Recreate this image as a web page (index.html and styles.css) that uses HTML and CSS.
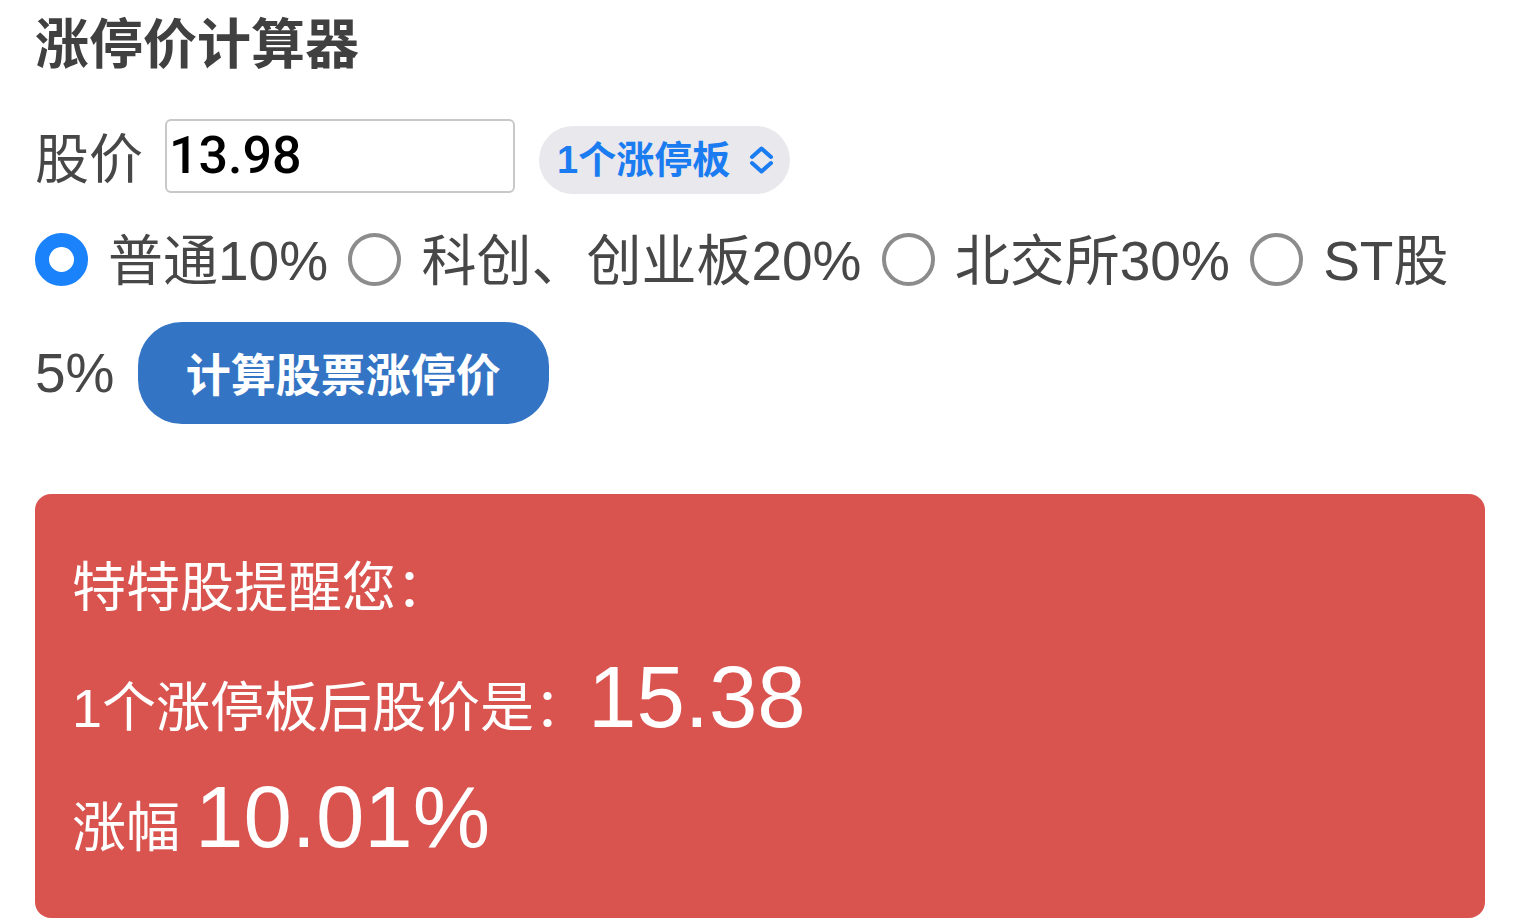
FILE: index.html
```html
<!DOCTYPE html>
<html lang="zh-CN">
<head>
<meta charset="utf-8">
<title>涨停价计算器</title>
<link rel="stylesheet" href="styles.css">
</head>
<body>
<main class="page">
  <h1 class="title">涨停价计算器</h1>
  <div class="price-row">
    <label class="price-label" for="price">股价</label>
    <input class="price-input" id="price" type="text" value="13.98">
    <div class="board-select" role="listbox">
      <span class="board-text">1个涨停板</span>
      <svg class="chev" width="27" height="30" viewBox="0 0 27 30" aria-hidden="true">
        <path d="M4 12 L13.5 3.5 L23 12" fill="none" stroke="#1a7cf0" stroke-width="4" stroke-linecap="round" stroke-linejoin="round"/>
        <path d="M4 18 L13.5 26.5 L23 18" fill="none" stroke="#1a7cf0" stroke-width="4" stroke-linecap="round" stroke-linejoin="round"/>
      </svg>
    </div>
  </div>
  <div class="options">
    <label class="opt"><input class="radio" type="radio" name="t" checked>普通10%</label>
    <label class="opt"><input class="radio" type="radio" name="t">科创、创业板20%</label>
    <label class="opt"><input class="radio" type="radio" name="t">北交所30%</label>
    <label class="opt"><input class="radio" type="radio" name="t">ST股5%</label>
    <button class="calc-btn" type="button">计算股票涨停价</button>
  </div>
  <section class="result">
    <p class="res-line">特特股提醒您：</p>
    <p class="res-line">1个涨停板后股价是：<span class="big">15.38</span></p>
    <p class="res-line">涨幅 <span class="big">10.01%</span></p>
  </section>
</main>
</body>
</html>
```

FILE: styles.css
```css
html, body {
  margin: 0;
  padding: 0;
  background: #ffffff;
}

body {
  font-family: "Liberation Sans", "Noto Sans CJK SC", sans-serif;
  color: #474747;
}

.page {
  padding: 0 24px 0 35px;
  width: 1460px;
}

.title {
  margin: 11px 0 0 0;
  font-size: 54px;
  line-height: 60px;
  font-weight: 700;
  color: #404040;
  font-family: "Noto Sans CJK SC", sans-serif;
}

.price-row {
  display: flex;
  align-items: center;
  margin-top: 47px;
  height: 75px;
}

.price-label {
  font-size: 54px;
  color: #474747;
  margin-right: 22px;
}

.price-input {
  box-sizing: border-box;
  width: 350px;
  height: 74px;
  border: 2px solid #c8c8c8;
  border-radius: 6px;
  padding: 0 2px;
  font-family: "Roboto", "Liberation Sans", sans-serif;
  font-weight: 500;
  font-size: 52px;
  color: #000;
  outline: none;
  margin-right: 24px;
}

.board-select {
  box-sizing: border-box;
  height: 68px;
  margin-top: 8px;
  border-radius: 34px;
  background: #e8e8ed;
  display: flex;
  align-items: center;
  padding: 0 15px 0 18px;
  gap: 18px;
  white-space: nowrap;
  flex: none;
}

.board-text {
  font-size: 38px;
  font-weight: 700;
  color: #1a7cf0;
  line-height: 1;
  white-space: nowrap;
}

.chev {
  display: block;
  flex: none;
}

.options {
  margin-top: 12px;
  font-size: 55px;
  line-height: 112px;
  color: #474747;
}

.opt {
  margin-right: 5px;
}

.radio {
  appearance: none;
  -webkit-appearance: none;
  box-sizing: border-box;
  width: 53px;
  height: 53px;
  margin: 0 20px 0 0;
  border: 4px solid #8c8c8c;
  border-radius: 50%;
  background: #fff;
  vertical-align: -6px;
}

.radio:checked {
  border: 14px solid #1a82fb;
}

.calc-btn {
  box-sizing: border-box;
  height: 102px;
  padding: 0 48px;
  border: none;
  border-radius: 44px;
  background: #3474c4;
  color: #ffffff;
  font-family: "Noto Sans CJK SC", sans-serif;
  font-weight: 700;
  font-size: 45px;
  line-height: 102px;
  vertical-align: baseline;
  margin-left: 3px;
}

.result {
  margin-top: 65px;
  box-sizing: border-box;
  width: 1450px;
  height: 424px;
  border-radius: 16px;
  background: #d9534f;
  padding: 34px 38px 30px 37px;
  color: #ffffff;
}

.res-line {
  margin: 0;
  font-size: 54px;
  line-height: 120px;
}

.big {
  font-size: 87px;
  line-height: 1;
}
```
